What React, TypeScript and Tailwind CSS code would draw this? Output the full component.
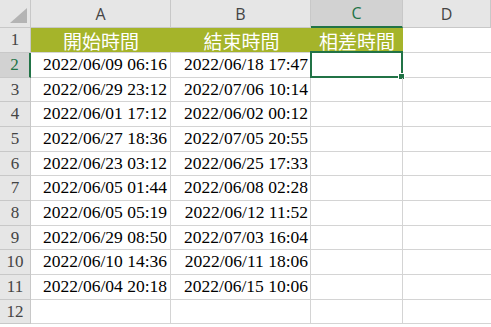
import React from "react";

const rows: [string, string][] = [
  ["2022/06/09 06:16", "2022/06/18 17:47"],
  ["2022/06/29 23:12", "2022/07/06 10:14"],
  ["2022/06/01 17:12", "2022/06/02 00:12"],
  ["2022/06/27 18:36", "2022/07/05 20:55"],
  ["2022/06/23 03:12", "2022/06/25 17:33"],
  ["2022/06/05 01:44", "2022/06/08 02:28"],
  ["2022/06/05 05:19", "2022/06/12 11:52"],
  ["2022/06/29 08:50", "2022/07/03 16:04"],
  ["2022/06/10 14:36", "2022/06/11 18:06"],
  ["2022/06/04 20:18", "2022/06/15 10:06"],
  ["", ""],
];

const heights = ["h-[25px]", "h-[25px]", "h-[24px]", "h-[25px]", "h-[25px]", "h-[24px]", "h-[25px]", "h-[25px]", "h-[24px]", "h-[25px]", "h-[25px]", "h-[24px]"];

const serif = "font-['Liberation_Serif','Noto_Sans_CJK_TC',serif]";
const cjk = "font-['Noto_Sans_CJK_TC','Noto_Sans_CJK_SC',sans-serif]";
const ui = "font-['Open_Sans','Liberation_Sans',sans-serif]";

export default function App() {
  return (
    <div className="w-[491px] h-[327px] bg-white overflow-hidden">
      <div className="grid grid-cols-[31px_140px_140px_92px_88px]">
        {/* header row */}
        <div className="h-[28px] bg-[#e6e6e6] border-r border-b border-[#c8c8c8] relative">
          <svg className="absolute right-[3px] bottom-[4px]" width="17" height="15" viewBox="0 0 17 15">
            <polygon points="17,0 17,15 0,15" fill="#b4b4b4" />
          </svg>
        </div>
        <div className={`h-[28px] bg-[#e6e6e6] border-r border-b border-[#c8c8c8] flex items-center justify-center text-[16px] text-[#444] ${ui}`}>A</div>
        <div className={`h-[28px] bg-[#e6e6e6] border-r border-b border-[#c8c8c8] flex items-center justify-center text-[16px] text-[#444] ${ui}`}>B</div>
        <div className={`h-[28px] bg-[#d2d2d2] border-r border-[#c8c8c8] border-b-2 border-b-[#217346] flex items-center justify-center text-[16px] text-[#217346] ${ui}`}>C</div>
        <div className={`h-[28px] bg-[#e6e6e6] border-r border-b border-[#c8c8c8] flex items-center justify-center text-[16px] text-[#444] ${ui}`}>D</div>

        {/* row 1 */}
        <div className={`${heights[0]} bg-[#e6e6e6] border-r border-b border-[#c8c8c8] flex items-center justify-center text-[17px] text-[#444] ${serif}`}>1</div>
        <div className={`${heights[0]} bg-[#a5b42a] border-b border-[#d4d4d4] flex items-center justify-center text-[19px] leading-none text-white ${cjk}`}>開始時間</div>
        <div className={`${heights[0]} bg-[#a5b42a] border-b border-[#d4d4d4] flex items-center justify-center text-[19px] leading-none text-white pl-[1px] ${cjk}`}>結束時間</div>
        <div className={`${heights[0]} bg-[#a5b42a] border-b border-[#d4d4d4] flex items-center justify-center text-[19px] leading-none text-white ${cjk}`}>相差時間</div>
        <div className={`${heights[0]} bg-white border-b border-[#d4d4d4]`}></div>

        {rows.map((r, i) => {
          const h = heights[i + 1];
          const sel = i === 0;
          return (
            <React.Fragment key={i}>
              <div
                className={`${h} ${sel ? "bg-[#d2d2d2] border-r-2 border-r-[#217346] text-[#217346]" : "bg-[#e6e6e6] border-r border-[#c8c8c8] text-[#444]"} border-b border-b-[#c8c8c8] flex items-center justify-center text-[17px] ${serif}`}
              >
                {i + 2}
              </div>
              <div className={`${h} border-r border-b border-[#d4d4d4] flex items-center justify-end pr-[3px] text-[17.5px] leading-none text-black ${serif}`}>{r[0]}</div>
              <div className={`${h} border-r border-b border-[#d4d4d4] flex items-center justify-end pr-[2px] text-[17.5px] leading-none text-black ${serif}`}>{r[1]}</div>
              <div className={`${h} border-r border-b border-[#d4d4d4] relative`}>
                {sel && (
                  <>
                    <div className="absolute left-[-1px] top-[-2px] right-[-1px] bottom-[-1px] border-2 border-[#217346]"></div>
                    <div className="absolute right-[-3px] bottom-[-3px] w-[5px] h-[5px] bg-[#217346] border border-white box-content"></div>
                  </>
                )}
              </div>
              <div className={`${h} border-b border-[#d4d4d4]`}></div>
            </React.Fragment>
          );
        })}
      </div>
    </div>
  );
}
